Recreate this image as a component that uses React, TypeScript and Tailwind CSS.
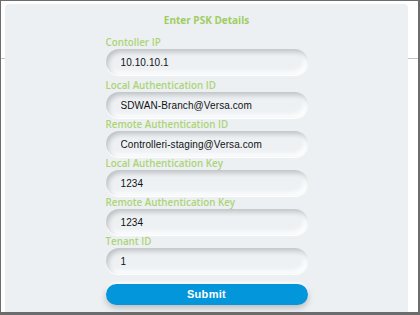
import { useState } from 'react';

interface Field {
  label: string;
  value: string;
}

const fields: Field[] = [
  { label: 'Contoller IP', value: '10.10.10.1' },
  { label: 'Local Authentication ID', value: 'SDWAN-Branch@Versa.com' },
  { label: 'Remote Authentication ID', value: 'Controlleri-staging@Versa.com' },
  { label: 'Local Authentication Key', value: '1234' },
  { label: 'Remote Authentication Key', value: '1234' },
  { label: 'Tenant ID', value: '1' },
];

export default function App() {
  const [values, setValues] = useState(fields.map((f) => f.value));

  return (
    <div className="relative w-[420px] h-[315px] overflow-hidden bg-white border-t border-l border-r-2 border-b-[3px] border-[#6c6c6c]">
      {/* faint divider of the page behind the panel */}
      <div className="absolute left-0 right-0 top-[57px] h-px bg-[#c4c4c4]" />

      <div className="relative ml-[4px] mt-[3px] w-[403px] h-[308px] rounded-t-[4px] bg-[#ecf0f3] flex flex-col items-center">
        <h1 className="mt-[9px] h-[14px] leading-[14px] text-[10px] font-bold text-[#9fcd5f] font-['Open_Sans',sans-serif]">
          Enter PSK Details
        </h1>

        <form className="mt-[9px] w-[202px] flex flex-col" onSubmit={(e) => e.preventDefault()}>
          {fields.map((field, i) => (
            <div key={field.label} className={i === 0 ? 'mb-[4px]' : ''}>
              <label className="block h-[13px] leading-[13px] text-[9.8px] font-semibold text-[#acd476] font-['Open_Sans',sans-serif]">
                {field.label}
              </label>
              <input
                type="text"
                value={values[i]}
                onChange={(e) =>
                  setValues((prev) => prev.map((v, j) => (j === i ? e.target.value : v)))
                }
                className="block w-full h-[26px] rounded-full bg-[#eef1f4] pl-[15px] text-[10px] tracking-[0.1px] text-[#111] font-['Liberation_Sans',sans-serif] outline-none shadow-[inset_2px_3px_5px_rgba(0,0,0,0.2),inset_-3px_-3px_5px_rgba(255,255,255,0.95),0_1px_1px_#ffffff]"
              />
            </div>
          ))}

          <button
            type="submit"
            className="mt-[10px] h-[21px] w-full rounded-full bg-[#0396db] text-[11px] font-bold tracking-[0.3px] text-white font-['Liberation_Sans',sans-serif] shadow-[0_3px_6px_rgba(0,0,0,0.22),0_-2px_3px_#ffffff]"
          >
            Submit
          </button>
        </form>
      </div>
    </div>
  );
}
